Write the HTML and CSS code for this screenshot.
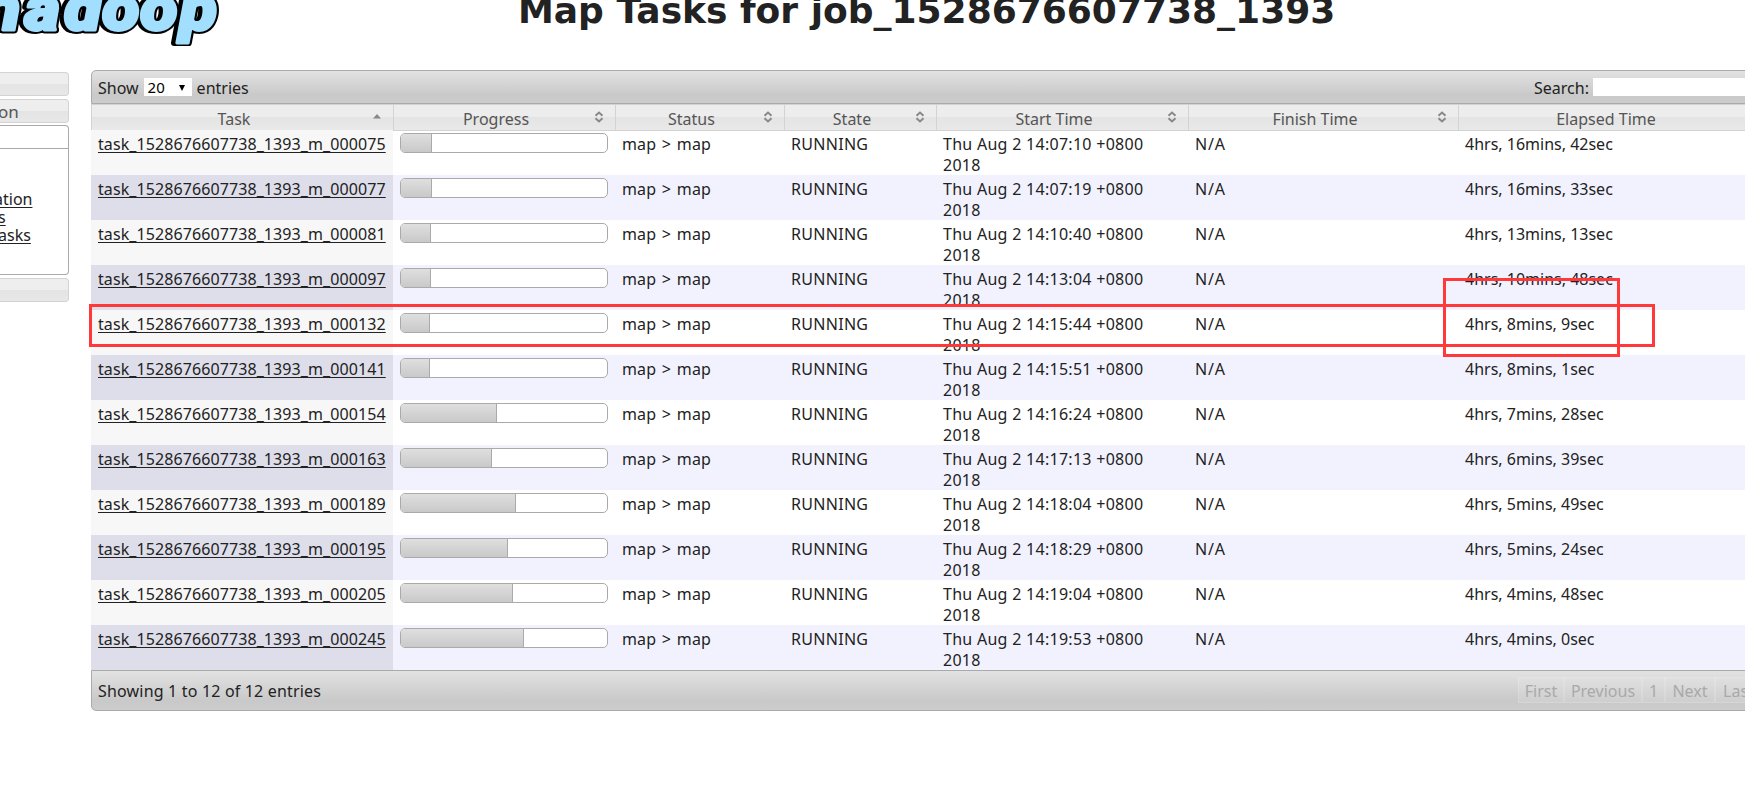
FILE: index.html
```
<!DOCTYPE html>
<html lang="en">
<head>
<meta charset="utf-8">
<title>Map Tasks for job_1528676607738_1393</title>
<link rel="stylesheet" href="styles.css">
</head>
<body>
<header class="header">
  <svg class="logo" width="230" height="46" viewBox="0 0 230 46" role="img" aria-label="hadoop">
    <g font-family="Roboto, sans-serif" font-weight="900" font-style="italic" font-size="62" transform="scale(1.1 1)">
      <text class="logo-shadow" x="-18 20 56 90.500 125 161" y="30">hadoop</text>
      <text class="logo-face" x="-15.500 22.500 58.500 93 127.500 163.500" y="29.500">hadoop</text>
      <text class="logo-fill" x="-15.500 22.500 58.500 93 127.500 163.500" y="29.500">hadoop</text>
    </g>
  </svg>
  <h1 class="title">Map Tasks for job_1528676607738_1393</h1>
</header>
<main class="layout">
  <nav class="sidebar">
    <h3 class="nav-head"></h3>
    <h3 class="nav-head"><span>on</span></h3>
    <div class="nav-panel">
      <div class="nav-top"></div>
      <ul class="nav-links">
        <li><a class="l1">ation</a></li>
        <li><a class="l2">s</a></li>
        <li><a class="l3">asks</a></li>
      </ul>
    </div>
    <h3 class="nav-head"></h3>
  </nav>
  <section class="table-wrap">
    <div class="bar bar-top">
      <div class="length"><span class="show">Show</span><span class="select"><span>20</span><i class="arrow"></i></span><span>entries</span></div>
      <div class="filter"><span>Search:</span><span class="search-input"></span></div>
    </div>
    <div class="thead">
      <div class="th"><span>Task</span><svg class="sort" width="10" height="12" viewBox="0 0 10 12"><path d="M1 7.500 5 3 9 7.500Z" fill="#888"/></svg></div>
      <div class="th"><span>Progress</span><svg class="sort" width="10" height="12"><use href="#both"/></svg></div>
      <div class="th"><span>Status</span><svg class="sort" width="10" height="12"><use href="#both"/></svg></div>
      <div class="th"><span>State</span><svg class="sort" width="10" height="12"><use href="#both"/></svg></div>
      <div class="th"><span>Start Time</span><svg class="sort" width="10" height="12"><use href="#both"/></svg></div>
      <div class="th"><span>Finish Time</span><svg class="sort" width="10" height="12"><use href="#both"/></svg></div>
      <div class="th"><span>Elapsed Time</span></div>
    </div>
    <div id="rows"></div>
    <div class="bar bar-bottom">
      <div class="info">Showing 1 to 12 of 12 entries</div>
      <div class="pager"><span class="p1">First</span><span class="p2">Previous</span><span class="p3">1</span><span class="p4">Next</span><span class="p5">Last</span></div>
    </div>
  </section>
</main>
<svg class="defs" width="0" height="0"><symbol id="both" viewBox="0 0 10 12"><path d="M1.500 4.700 5 1.500 8.500 4.700M1.500 7.300 5 10.500 8.500 7.300" fill="none" stroke="#888" stroke-width="2"/></symbol></svg>
<div class="mark mark-row"></div>
<div class="mark mark-cell"></div>
<script src="rows.js"></script>
</body>
</html>
```
FILE: styles.css
```
* { box-sizing: border-box; }
html, body { margin: 0; height: 794px; overflow: hidden; background: #fff; }
body { font: 16px/21px "Noto Sans", "Open Sans", sans-serif; color: #222; }
.header { height: 70px; display: flex; }
.logo { flex: none; overflow: hidden; }
.logo-shadow { fill: #000; stroke: #000; stroke-width: 6; stroke-linejoin: round; }
.logo-face { fill: #000; stroke: #000; stroke-width: 7; stroke-linejoin: round; }
.logo-fill { fill: #a2dfff; stroke: #a2dfff; stroke-width: 3; stroke-linejoin: round; }
.title { margin: -11px 0 0 288px; font: bold 36px/44px "DejaVu Sans", sans-serif; white-space: nowrap; }
.layout { display: flex; overflow: hidden; }
.sidebar { width: 69px; margin: 2px 22px 0 0; flex: none; }
.nav-head { margin: 0 0 3px; height: 24px; border: 1px solid #d3d3d3; border-left: 0; border-radius: 0 4px 4px 0; background: linear-gradient(#eee 0 50%, #e4e4e4 50%, #e8e8e8); font-weight: normal; font-size: 17px; line-height: 24px; color: #555; }
.nav-head span { margin-left: -2px; }
.nav-panel { height: 150px; margin: -1px 0 3px; border: 1px solid #aaa; border-left: 0; border-radius: 0 4px 4px 0; }
.nav-top { height: 23px; border-bottom: 1px solid #aaa; }
.nav-links { list-style: none; margin: 41px 0 0; padding: 0; line-height: 18px; }
.nav-links a, .task a { text-decoration: underline; text-underline-offset: 2px; text-decoration-thickness: 1px; text-decoration-skip-ink: none; }
.l1 { margin-left: -6px; }
.l2 { margin-left: -2px; }
.l3 { margin-left: -2px; }
.table-wrap { width: 1800px; flex: none; }
.bar { display: flex; border: 1px solid #aaa; background: linear-gradient(#e2e2e2, #c9c9c9 75%, #ccc); }
.bar-top { height: 34px; border-radius: 5px 5px 0 0; align-items: center; }
.length { display: flex; width: 1436px; padding: 2px 0 0 6px; align-items: center; }
.select { display: flex; width: 48px; height: 18px; margin: -2px 5px 0; padding: 1px 7px 0 4px; background: #fff; color: #000; align-items: center; justify-content: space-between; font-size: 15px; }
.arrow { border: 3px solid transparent; border-top: 6px solid #000; border-bottom: 0; }
.filter { display: flex; padding: 2px 0 0 6px; align-items: center; }
.search-input { width: 200px; height: 18px; margin: -2px 0 0 4px; background: #fff; }
.thead, .row { display: grid; grid-template-columns: 302px 222px 169px 152px 252px 270px 433px; }
.thead { height: 26px; color: #555; }
.th { display: flex; align-items: center; border: 1px solid #d3d3d3; border-right: 0; background: linear-gradient(#ededed 0 50%, #e4e4e4 50%, #e9e9e9); padding: 4px 11px 0 4px; }
.th span { flex: 1; text-align: center; }
.th:last-child { padding-right: 142px; }
.sort { flex: none; margin-top: -5px; }
.row { height: 45px; grid-template-rows: 45px; }
.row > div { padding: 4px 0 0 7px; white-space: nowrap; }
.row .task { background: #f7f7f7; letter-spacing: .09px; }
.row .status { letter-spacing: .1px; word-spacing: 1.5px; }
.row .state { letter-spacing: .3px; }
.row .start { letter-spacing: .28px; }
.row .finish { letter-spacing: .8px; }
.row:nth-child(even) { background: #f2f2ff; }
.row:nth-child(even) .task { background: #dedeea; }
.row .progress { padding: 3px 7px 0; }
.track { height: 20px; border: 1px solid #aaa; border-radius: 5px; background: #fff; overflow: hidden; }
.fill { height: 18px; border-right: 1px solid #aaa; background: linear-gradient(#dfdfdf, #c9c9c9); }
.bar-bottom { height: 41px; border-radius: 0 0 5px 5px; }
.info { width: 1426px; padding: 10px 0 0 6px; letter-spacing: .18px; }
.pager { display: flex; margin-top: 6px; height: 26px; color: #a9a9a9; }
.pager span { border: 1px solid rgba(255,255,255,.15); background: rgba(255,255,255,.12); text-align: center; line-height: 27px; }
.p1 { width: 46px; } .p2 { width: 78px; } .p3 { width: 23px; } .p4 { width: 50px; } .p5 { width: 47px; }
.defs { position: absolute; }
.mark { position: absolute; border: 3px solid #ff3939; }
.mark-row { left: 89px; top: 304px; width: 1566px; height: 43px; }
.mark-cell { left: 1443px; top: 278px; width: 177px; height: 79px; }
```
FILE: rows.js
```
const tasks = [
  ["000075", "14:07:10", "16mins, 42sec", 31],
  ["000077", "14:07:19", "16mins, 33sec", 31],
  ["000081", "14:10:40", "13mins, 13sec", 30],
  ["000097", "14:13:04", "10mins, 48sec", 30],
  ["000132", "14:15:44", "8mins, 9sec", 29],
  ["000141", "14:15:51", "8mins, 1sec", 29],
  ["000154", "14:16:24", "7mins, 28sec", 96],
  ["000163", "14:17:13", "6mins, 39sec", 91],
  ["000189", "14:18:04", "5mins, 49sec", 115],
  ["000195", "14:18:29", "5mins, 24sec", 107],
  ["000205", "14:19:04", "4mins, 48sec", 112],
  ["000245", "14:19:53", "4mins, 0sec", 123]
];
document.getElementById("rows").innerHTML = tasks.map(([id, start, elapsed, width]) => `
  <div class="row">
    <div class="task"><a>task_1528676607738_1393_m_${id}</a></div>
    <div class="progress"><div class="track"><div class="fill" style="width:${width}px"></div></div></div>
    <div class="status">map &gt; map</div>
    <div class="state">RUNNING</div>
    <div class="start">Thu Aug 2 ${start} +0800<br>2018</div>
    <div class="finish">N/A</div>
    <div class="elapsed">4hrs, ${elapsed}</div>
  </div>`).join("");
```
